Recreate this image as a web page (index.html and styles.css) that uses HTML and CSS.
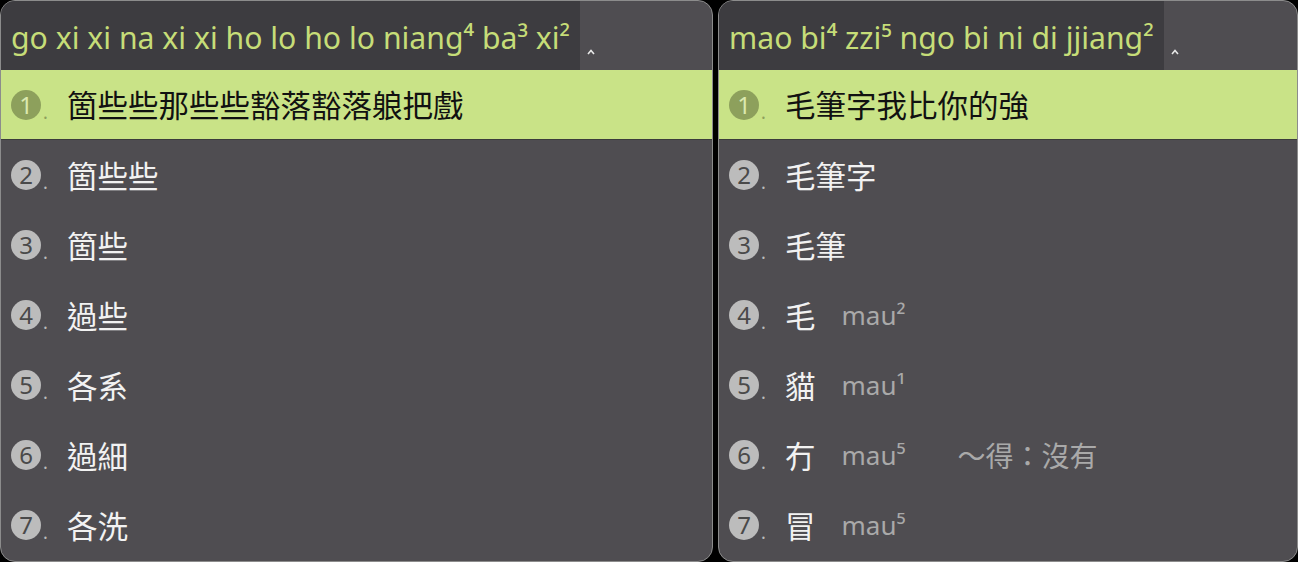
FILE: index.html
```html
<!DOCTYPE html>
<html lang="zh-Hant">
<head>
<meta charset="utf-8">
<title>Candidates</title>
<link rel="stylesheet" href="styles.css">
</head>
<body>
<div class="desk">
  <div class="panel panel-left">
    <div class="head">
      <div class="preedit">go xi xi na xi xi ho lo ho lo niang⁴ ba³ xi²</div>
      <div class="caret"><svg width="8" height="6" viewBox="0 0 8 6"><path d="M1 5 L4 1.5 L7 5" fill="none" stroke="#e8e8e8" stroke-width="1.6"/></svg></div>
    </div>
    <div class="cand cand-hl"><span class="idx">1</span><span class="dot">.</span><span class="word">箇些些那些些豁落豁落躴把戲</span></div>
    <div class="cand"><span class="idx">2</span><span class="dot">.</span><span class="word">箇些些</span></div>
    <div class="cand"><span class="idx">3</span><span class="dot">.</span><span class="word">箇些</span></div>
    <div class="cand"><span class="idx">4</span><span class="dot">.</span><span class="word">過些</span></div>
    <div class="cand"><span class="idx">5</span><span class="dot">.</span><span class="word">各系</span></div>
    <div class="cand"><span class="idx">6</span><span class="dot">.</span><span class="word">過細</span></div>
    <div class="cand"><span class="idx">7</span><span class="dot">.</span><span class="word">各洗</span></div>
  </div>
  <div class="panel panel-right">
    <div class="head">
      <div class="preedit">mao bi⁴ zzi⁵ ngo bi ni di jjiang²</div>
      <div class="caret"><svg width="8" height="6" viewBox="0 0 8 6"><path d="M1 5 L4 1.5 L7 5" fill="none" stroke="#e8e8e8" stroke-width="1.6"/></svg></div>
    </div>
    <div class="cand cand-hl"><span class="idx">1</span><span class="dot">.</span><span class="word">毛筆字我比你的強</span></div>
    <div class="cand"><span class="idx">2</span><span class="dot">.</span><span class="word">毛筆字</span></div>
    <div class="cand"><span class="idx">3</span><span class="dot">.</span><span class="word">毛筆</span></div>
    <div class="cand"><span class="idx">4</span><span class="dot">.</span><span class="word">毛</span><span class="comment">mau²</span></div>
    <div class="cand"><span class="idx">5</span><span class="dot">.</span><span class="word">貓</span><span class="comment">mau¹</span></div>
    <div class="cand"><span class="idx">6</span><span class="dot">.</span><span class="word">冇</span><span class="comment">mau⁵</span><span class="gloss">～得：沒有</span></div>
    <div class="cand"><span class="idx">7</span><span class="dot">.</span><span class="word">冒</span><span class="comment">mau⁵</span></div>
  </div>
</div>
</body>
</html>
```

FILE: styles.css
```css
html, body {
  margin: 0;
  padding: 0;
  background: #000;
}
.desk {
  display: flex;
  gap: 5px;
  width: 1298px;
  height: 562px;
}
.panel {
  box-sizing: border-box;
  height: 562px;
  background: #4f4d51;
  border: 1px solid #8c8c8c;
  border-radius: 15px;
  overflow: hidden;
  display: flex;
  flex-direction: column;
}
.panel-left { width: 713px; }
.panel-right { width: 580px; }
.head {
  height: 69px;
  display: flex;
  align-items: stretch;
  flex: none;
}
.preedit {
  background: #3d3c40;
  padding: 4px 10px 0 10px;
  display: flex;
  align-items: center;
  font-family: "Noto Sans", sans-serif;
  font-size: 30.2px;
  color: #c6dd78;
  white-space: pre;
}
.caret {
  display: flex;
  align-items: flex-end;
  padding: 0 0 15px 7px;
}
.cand {
  height: 70px;
  flex: none;
  display: flex;
  align-items: center;
  color: #f2f2f2;
  font-family: "Noto Sans CJK TC", "Noto Sans CJK SC", sans-serif;
}
.cand-hl {
  background: #c9e387;
  color: #111;
  border-bottom: 1px solid #3c3c3c;
  box-sizing: border-box;
}
.idx {
  width: 30px;
  height: 30px;
  margin-left: 10px;
  border-radius: 50%;
  background: #bcbcbc;
  color: #4a4a4a;
  font-family: "Noto Sans", sans-serif;
  font-size: 24px;
  line-height: 30px;
  text-align: center;
  flex: none;
}
.cand-hl .idx {
  background: #8da05c;
  color: #dbe9b0;
}
.dot {
  width: 26px;
  flex: none;
  font-family: "Noto Sans", sans-serif;
  font-size: 18px;
  color: #bcbcbc;
  padding-top: 14px;
  padding-left: 2px;
  box-sizing: border-box;
}
.cand-hl .dot { color: #8da05c; }
.word {
  font-size: 30.5px;
  line-height: 1;
}
.comment {
  margin-left: 26px;
  font-family: "Noto Sans", sans-serif;
  font-size: 26px;
  color: #a9a9a9;
}
.gloss {
  margin-left: 52px;
  font-size: 28px;
  color: #a9a9a9;
}
```
